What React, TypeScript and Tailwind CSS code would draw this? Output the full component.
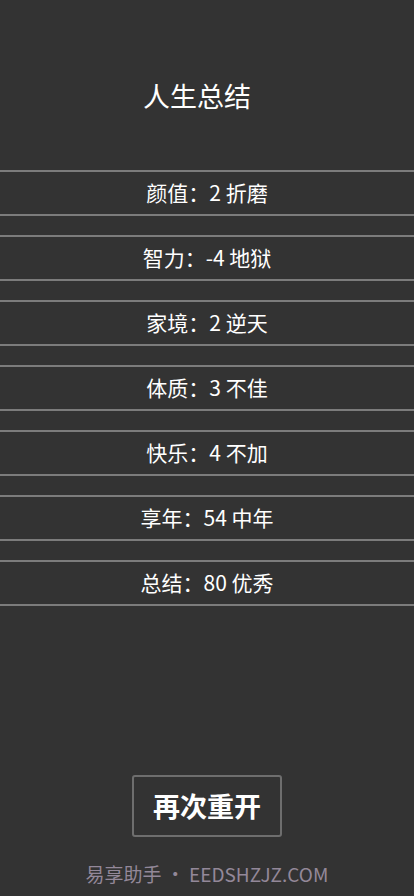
const rows = [
    {label: '颜值', value: '2 折磨'},
    {label: '智力', value: '-4 地狱'},
    {label: '家境', value: '2 逆天'},
    {label: '体质', value: '3 不佳'},
    {label: '快乐', value: '4 不加'},
    {label: '享年', value: '54 中年'},
    {label: '总结', value: '80 优秀'}
];

const font = "font-['Noto_Sans_CJK_SC',sans-serif]";

export default function App() {
    return (
        <div className={`flex h-[896px] w-full flex-col bg-[#333333] text-white ${font}`}>
            <h1 className="pt-[78px] pr-[20px] text-center text-[27px] leading-[36px] font-normal">人生总结</h1>

            <ul className="mt-[56px] flex flex-col gap-[19px]">
                {rows.map(row => (
                    <li
                        key={row.label}
                        className="flex h-[46px] items-center justify-center border-y-2 border-[#7c7c7c] text-[21px]"
                    >
                        {row.label}：{row.value}
                    </li>
                ))}
            </ul>

            <div className="mt-auto flex flex-col items-center">
                <button className="h-[62px] w-[150px] rounded-[3px] border-2 border-[#6e6e6e] text-[27px] font-bold">
                    再次重开
                </button>
                <p className="mt-[23px] mb-[9px] text-[19px] leading-[27px] text-[#938899]">
                    易享助手 • EEDSHZJZ.COM
                </p>
            </div>
        </div>
    );
}
